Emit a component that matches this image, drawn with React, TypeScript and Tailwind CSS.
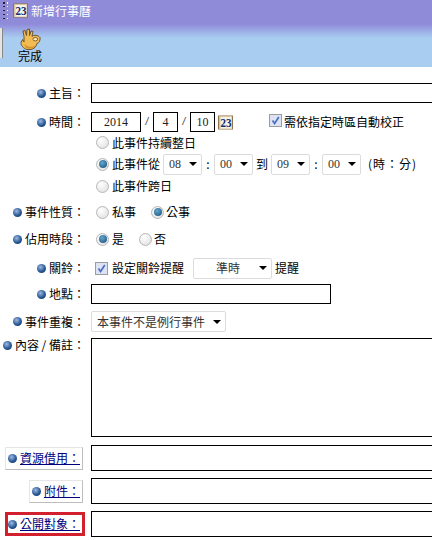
import React from "react";

const font = "font-['Noto_Sans_CJK_TC','Liberation_Sans',sans-serif]";

function Bullet() {
  return (
    <span className="mr-[3px] inline-block h-[9px] w-[9px] shrink-0 rounded-full bg-[radial-gradient(circle_at_40%_35%,#9db8e4,#24548f_58%,#102f5e)]" />
  );
}

function Label({ children }: { children: React.ReactNode }) {
  return (
    <span className="flex items-center justify-end whitespace-nowrap text-black">
      <Bullet />
      <span>{children}</span>
    </span>
  );
}

function Row({
  label,
  className,
  children,
  start,
}: {
  label?: React.ReactNode;
  className?: string;
  children?: React.ReactNode;
  start?: boolean;
}) {
  return (
    <div className={`flex shrink-0 ${start ? "items-start" : "items-center"} ${className ?? ""}`}>
      <div className="w-[85px] shrink-0">{label}</div>
      <div className="ml-[6px] flex h-full min-w-0 flex-1 items-center">{children}</div>
    </div>
  );
}

function Box({ className, children }: { className?: string; children?: React.ReactNode }) {
  return (
    <div className={`flex h-full shrink-0 items-center justify-center border border-black bg-white font-['Liberation_Serif',serif] text-[#222] ${className ?? ""}`}>
      {children}
    </div>
  );
}

function Slash() {
  return <span className="mx-[3px] w-[6px] text-center font-['Liberation_Sans',sans-serif] text-[10px] italic text-[#333]">/</span>;
}

function Radio({ on, className }: { on?: boolean; className?: string }) {
  return (
    <span
      className={`flex h-[13px] w-[13px] shrink-0 items-center justify-center rounded-full border border-[#b8b8b8] bg-[radial-gradient(circle_at_35%_30%,#ffffff,#dcdcdc)] ${className ?? ""}`}
    >
      {on && <span className="h-[8px] w-[8px] rounded-full bg-[radial-gradient(circle_at_40%_35%,#62a8cc,#164a78)]" />}
    </span>
  );
}

function Check({ className }: { className?: string }) {
  return (
    <span className={`flex h-[13px] w-[13px] shrink-0 items-center justify-center border border-[#9c9c9c] bg-[#dde3f2] ${className ?? ""}`}>
      <svg width="9" height="9" viewBox="0 0 9 9">
        <path d="M1.5 4.5 L3.6 7.5 L7.8 1" fill="none" stroke="#4a6fc0" strokeWidth="1.7" />
      </svg>
    </span>
  );
}

function Select({
  value,
  className,
  center,
  serif,
}: {
  value: string;
  className?: string;
  center?: boolean;
  serif?: boolean;
}) {
  return (
    <div
      className={`flex h-[21px] shrink-0 items-center rounded-[2px] border border-[#dcdcdc] bg-white pl-[5px] pr-[4px] text-[#333] ${className ?? ""}`}
    >
      <span className={`flex-1 whitespace-nowrap ${center ? "text-center" : ""} ${serif ? "font-['Liberation_Serif',serif]" : ""}`}>{value}</span>
      <span className="ml-[2px] h-0 w-0 border-x-[4px] border-t-[4px] border-x-transparent border-t-black" />
    </div>
  );
}

function CalendarIcon({ className }: { className?: string }) {
  return (
    <svg className={className} width="15" height="15" viewBox="0 0 15 15">
      <rect x="0" y="0.5" width="15" height="14" fill="#8f734c" />
      <rect x="1" y="1" width="13" height="13" fill="#d8c49c" />
      <rect x="2.5" y="2" width="11" height="11.5" fill="#f5f2ea" />
      <text x="8" y="12" textAnchor="middle" fontSize="12" fontWeight="700" fontFamily="Liberation Serif" fill="#102c70" textLength="11" lengthAdjust="spacingAndGlyphs">
        23
      </text>
    </svg>
  );
}

function Hand() {
  return (
    <svg width="21" height="22" viewBox="0 0 21 22">
      <path
        d="M7 21.5 C3.5 20.5 1 17.5 1 14.5 L2.5 11.5 L4 14 L4 8.5 L3 3 L5 2.5 L6.5 7.5 L7 1.5 L9.5 1 L9.5 7.5 L11 3 L13 3.5 L12 8.5 C14 6.5 18 7 20 9.5 C20.5 12.5 19 15 17 15.5 C16.5 18.5 14 21 11 21.5 Z"
        fill="#f3bc52"
        stroke="#5e4a2a"
        strokeWidth="0.9"
        strokeLinejoin="round"
      />
      <path d="M4 15.5 C7 19 12 20 16 17 C14 21 9 21.5 6 20 Z" fill="#d8942f" />
      <ellipse cx="15.3" cy="11.2" rx="2.4" ry="1.7" fill="#fbe9b8" stroke="#5e4a2a" strokeWidth="0.8" />
    </svg>
  );
}

function LinkLabel({ children, className }: { children: React.ReactNode; className?: string }) {
  return (
    <span
      className={`flex h-[23px] items-center justify-end whitespace-nowrap border border-[#e6e6e6] border-b-[#bdbdbd] border-r-[#bdbdbd] bg-white pr-[2px] ${className ?? ""}`}
    >
      <Bullet />
      <span className="text-[#000080] underline">{children}</span>
    </span>
  );
}

export default function App() {
  return (
    <div className={`flex h-[540px] w-[432px] flex-col overflow-hidden bg-white text-[12px] leading-[14px] ${font}`}>
      <header className="flex h-[67px] shrink-0 flex-col bg-[linear-gradient(#8f8bd9_0,#8f8bd9_24px,#a9cdf1_38px,#a9cdf1_100%)]">
        <div className="flex h-[20px] shrink-0 items-center pl-[3px] pt-[1px]">
          <span className="flex h-[17px] w-[5px] flex-col justify-between">
            {[0, 1, 2, 3, 4].map((i) => (
              <span key={i} className="flex justify-between">
                <span className="h-[1.5px] w-[1.5px] bg-[#222]" />
                <span className="h-[1.5px] w-[1.5px] bg-white" />
              </span>
            ))}
          </span>
          <CalendarIcon className="ml-[5px]" />
          <span className="ml-[3px] text-white">新增行事曆</span>
        </div>
        <div className="mt-[8px] flex min-h-0 flex-1 items-start">
          <span className="h-[30px] w-[3px] shrink-0 border-r border-[#888] bg-[#e4e4e4]" />
          <div className="ml-[15px] flex w-[24px] flex-col items-center">
            <Hand />
            <span className="-mt-[1px] text-black">完成</span>
          </div>
        </div>
      </header>

      <main className="flex flex-col">
        <Row label={<Label>主旨：</Label>} className="mt-[16px] h-[20px]">
          <Box className="w-[400px]" />
        </Row>

        <Row label={<Label>時間：</Label>} className="mt-[9px] h-[20px]">
          <Box className="w-[50px]">2014</Box>
          <Slash />
          <Box className="w-[25px]">4</Box>
          <Slash />
          <Box className="w-[25px]">10</Box>
          <CalendarIcon className="ml-[3px]" />
          <Check className="ml-[36px] -mt-[3px]" />
          <span className="ml-[2px] -mt-[1px] whitespace-nowrap">需依指定時區自動校正</span>
        </Row>

        <Row className="h-[21px]">
          <Radio className="ml-[5px]" />
          <span className="ml-[3px]">此事件持續整日</span>
        </Row>
        <Row className="h-[22px]">
          <Radio on className="ml-[5px]" />
          <span className="ml-[3px] whitespace-nowrap">此事件從</span>
          <Select serif value="08" className="ml-[3px] w-[39px]" />
          <span className="w-[12px] text-center">:</span>
          <Select serif value="00" className="w-[39px]" />
          <span className="mx-[3px]">到</span>
          <Select serif value="09" className="w-[39px]" />
          <span className="w-[12px] text-center">:</span>
          <Select serif value="00" className="w-[39px]" />
          <span className="ml-[7px] whitespace-nowrap tracking-[1px]">(時：分)</span>
        </Row>
        <Row className="h-[22px]">
          <Radio className="ml-[5px]" />
          <span className="ml-[3px]">此事件跨日</span>
        </Row>

        <Row label={<Label>事件性質：</Label>} className="mt-[4px] h-[22px]">
          <Radio className="ml-[5px]" />
          <span className="ml-[3px]">私事</span>
          <Radio on className="ml-[15px]" />
          <span className="ml-[2px]">公事</span>
        </Row>

        <Row label={<Label>佔用時段：</Label>} className="mt-[5px] h-[22px]">
          <Radio on className="ml-[5px]" />
          <span className="ml-[3px]">是</span>
          <Radio className="ml-[15px]" />
          <span className="ml-[2px]">否</span>
        </Row>

        <Row label={<Label>關鈴：</Label>} className="mt-[8px] h-[20px]">
          <Check className="ml-[4px]" />
          <span className="ml-[4px] whitespace-nowrap">設定關鈴提醒</span>
          <Select center value="準時" className="ml-[9px] h-[20px] w-[79px]" />
          <span className="ml-[3px]">提醒</span>
        </Row>

        <Row label={<Label>地點：</Label>} className="mt-[6px] h-[20px]">
          <Box className="w-[240px]" />
        </Row>

        <Row label={<Label>事件重複：</Label>} className="mt-[7px] h-[21px]">
          <Select value="本事件不是例行事件" className="w-[135px] pl-[4px]" />
        </Row>

        <Row start label={<Label>內容 / 備註：</Label>} className="mt-[6px] h-[99px]">
          <Box className="w-[400px]" />
        </Row>

        <Row label={<LinkLabel className="ml-[5px] w-[78px]">資源借用：</LinkLabel>} className="mt-[8px] h-[26px]">
          <Box className="w-[400px]" />
        </Row>

        <Row label={<LinkLabel className="ml-[29px] w-[54px]">附件：</LinkLabel>} className="mt-[7px] h-[26px]">
          <Box className="w-[400px]" />
        </Row>

        <Row
          label={
            <span className="ml-[5px] flex h-[24px] w-[80px] items-center justify-end whitespace-nowrap border-[3px] border-[#d2202e] pr-[2px]">
              <Bullet />
              <span className="text-[#000080] underline">公開對象：</span>
            </span>
          }
          className="mt-[7px] h-[26px]"
        >
          <Box className="w-[400px]" />
        </Row>
      </main>
    </div>
  );
}
